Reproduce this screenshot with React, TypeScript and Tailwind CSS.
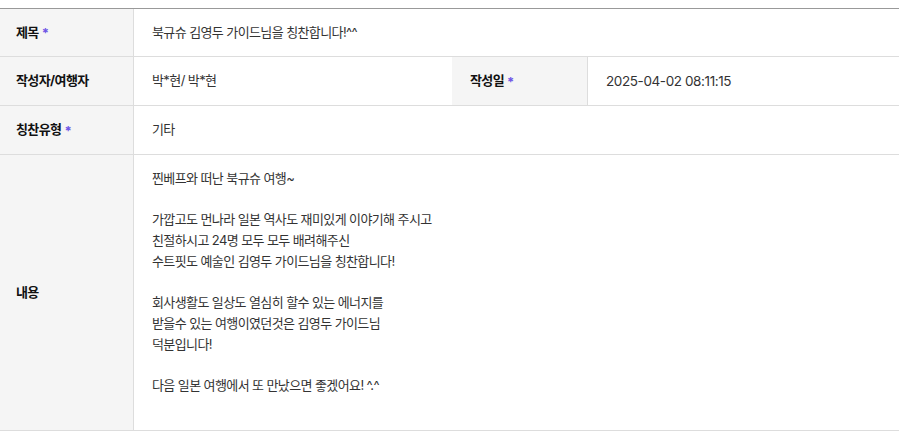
import React from "react";

const FONT = { fontFamily: '"Inter", "Noto Sans CJK KR", sans-serif' };

const CONTENT = [
  "찐베프와 떠난 북규슈 여행~",
  "",
  "가깝고도 먼나라 일본 역사도 재미있게 이야기해 주시고",
  "친절하시고 24명 모두 모두 배려해주신",
  "수트핏도 예술인 김영두 가이드님을 칭찬합니다!",
  "",
  "회사생활도 일상도 열심히 할수 있는 에너지를",
  "받을수 있는 여행이였던것은 김영두 가이드님",
  "덕분입니다!",
  "",
  "다음 일본 여행에서 또 만났으면 좋겠어요! ^.^",
];

function Label({ text, required, className = "" }: { text: string; required?: boolean; className?: string }) {
  return (
    <div
      className={`flex items-center bg-[#f5f5f5] border-r border-[#dddddd] font-bold text-[#111111] text-[13px] ${className}`}
    >
      <span>{text}</span>
      {required && (
        <span className="ml-[3px] text-[#6f55e6] text-[13px] leading-none relative top-[1px]">*</span>
      )}
    </div>
  );
}

export default function App() {
  return (
    <div className="bg-white w-[899px] h-[432px] pt-2 text-[13px] tracking-[-0.6px]" style={FONT}>
      <div className="border-t border-[#999999]">
        {/* 제목 */}
        <div className="flex h-[48px] border-b border-[#dddddd]">
          <Label text="제목" required className="w-[134px] pl-[16px]" />
          <div className="flex items-center pl-[18px] text-[#333333]">북규슈 김영두 가이드님을 칭찬합니다!^^</div>
        </div>

        {/* 작성자 / 작성일 */}
        <div className="flex h-[49px] border-b border-[#dddddd]">
          <Label text="작성자/여행자" className="w-[134px] pl-[16px]" />
          <div className="flex items-center w-[318px] pl-[18px] text-[#333333]">박*현/ 박*현</div>
          <Label text="작성일" required className="w-[136px] pl-[18px]" />
          <div className="flex items-center pl-[18px] text-[#333333] text-[13.5px] tracking-[-0.4px]">
            2025-04-02 08:11:15
          </div>
        </div>

        {/* 칭찬유형 */}
        <div className="flex h-[49px] border-b border-[#dddddd]">
          <Label text="칭찬유형" required className="w-[134px] pl-[16px]" />
          <div className="flex items-center pl-[18px] text-[#333333]">기타</div>
        </div>

        {/* 내용 */}
        <div className="flex h-[276px] border-b border-[#dddddd]">
          <Label text="내용" className="w-[134px] pl-[16px]" />
          <div className="pl-[18px] pt-[13px] text-[#333333] leading-[20.7px]">
            {CONTENT.map((line, i) => (
              <div key={i} className="h-[20.7px] whitespace-pre">
                {line || "\u00a0"}
              </div>
            ))}
          </div>
        </div>
      </div>
    </div>
  );
}
